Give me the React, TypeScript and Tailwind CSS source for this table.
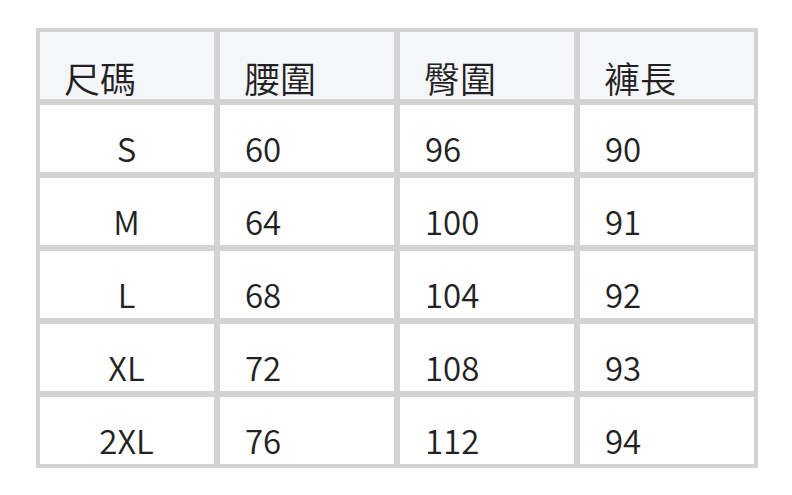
import React from 'react';

const headers = ['尺碼', '腰圍', '臀圍', '褲長'];

const rows = [
  ['S', '60', '96', '90'],
  ['M', '64', '100', '91'],
  ['L', '68', '104', '92'],
  ['XL', '72', '108', '93'],
  ['2XL', '76', '112', '94'],
];

export default function App() {
  return (
    <div
      className="min-h-[495px] w-[792px] bg-white pt-[28px] pl-[36px] font-[350]"
      style={{ fontFamily: '"Noto Sans CJK TC", "Noto Sans", sans-serif' }}
    >
      <div className="grid w-[722px] grid-cols-[repeat(4,174px)] gap-[6px] border-[4px] border-[#d3d3d3] bg-[#d3d3d3]">
        {headers.map((h) => (
          <div
            key={h}
            className="flex h-[67px] items-end bg-[#f5f6fa] pb-[4px] pl-[24px] text-[36px] leading-[36px] text-[#222]"
          >
            {h}
          </div>
        ))}
        {rows.map((r) =>
          r.map((c, i) => (
            <div
              key={r[0] + i}
              className={
                'flex h-[67px] items-end bg-white pb-[7px] text-[33px] leading-[33px] text-[#222] ' +
                (i === 0 ? 'justify-center pr-[1px]' : 'pl-[25px]')
              }
            >
              {c}
            </div>
          ))
        )}
      </div>
    </div>
  );
}
